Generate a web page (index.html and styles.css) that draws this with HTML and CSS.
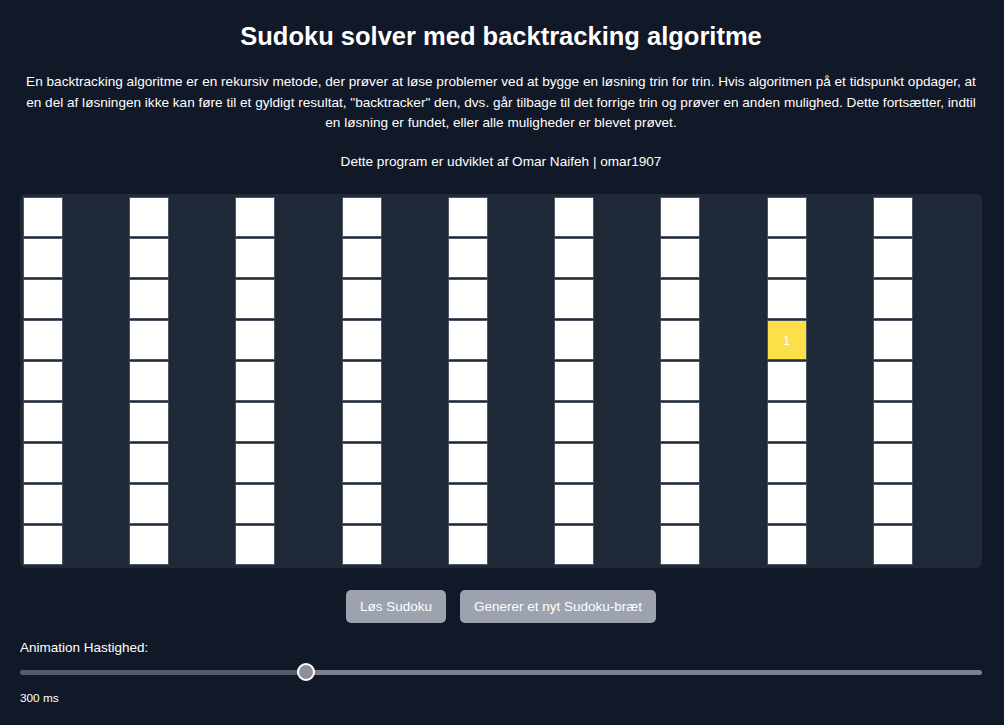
FILE: index.html
```html
<!DOCTYPE html>
<html lang="da">
<head>
<meta charset="utf-8">
<title>Sudoku solver</title>
<link rel="stylesheet" href="styles.css">
</head>
<body>
<main class="page">
  <h1 class="title">Sudoku solver med backtracking algoritme</h1>
  <p class="intro">En backtracking algoritme er en rekursiv metode, der prøver at løse problemer ved at bygge en løsning trin for trin. Hvis algoritmen på et tidspunkt opdager, at en del af løsningen ikke kan føre til et gyldigt resultat, "backtracker" den, dvs. går tilbage til det forrige trin og prøver en anden mulighed. Dette fortsætter, indtil en løsning er fundet, eller alle muligheder er blevet prøvet.</p>
  <p class="credit">Dette program er udviklet af Omar Naifeh | omar1907</p>

  <div class="board">
    <div class="cell"></div><div class="cell"></div><div class="cell"></div><div class="cell"></div><div class="cell"></div><div class="cell"></div><div class="cell"></div><div class="cell"></div><div class="cell"></div>
    <div class="cell"></div><div class="cell"></div><div class="cell"></div><div class="cell"></div><div class="cell"></div><div class="cell"></div><div class="cell"></div><div class="cell"></div><div class="cell"></div>
    <div class="cell"></div><div class="cell"></div><div class="cell"></div><div class="cell"></div><div class="cell"></div><div class="cell"></div><div class="cell"></div><div class="cell"></div><div class="cell"></div>
    <div class="cell"></div><div class="cell"></div><div class="cell"></div><div class="cell"></div><div class="cell"></div><div class="cell"></div><div class="cell"></div><div class="cell active">1</div><div class="cell"></div>
    <div class="cell"></div><div class="cell"></div><div class="cell"></div><div class="cell"></div><div class="cell"></div><div class="cell"></div><div class="cell"></div><div class="cell"></div><div class="cell"></div>
    <div class="cell"></div><div class="cell"></div><div class="cell"></div><div class="cell"></div><div class="cell"></div><div class="cell"></div><div class="cell"></div><div class="cell"></div><div class="cell"></div>
    <div class="cell"></div><div class="cell"></div><div class="cell"></div><div class="cell"></div><div class="cell"></div><div class="cell"></div><div class="cell"></div><div class="cell"></div><div class="cell"></div>
    <div class="cell"></div><div class="cell"></div><div class="cell"></div><div class="cell"></div><div class="cell"></div><div class="cell"></div><div class="cell"></div><div class="cell"></div><div class="cell"></div>
    <div class="cell"></div><div class="cell"></div><div class="cell"></div><div class="cell"></div><div class="cell"></div><div class="cell"></div><div class="cell"></div><div class="cell"></div><div class="cell"></div>
  </div>

  <div class="actions">
    <button class="btn">Løs Sudoku</button>
    <button class="btn">Generer et nyt Sudoku-bræt</button>
  </div>

  <label class="speed-label" for="speed">Animation Hastighed:</label>
  <input class="speed" id="speed" type="range" min="10" max="1000" value="300">
  <div class="speed-value">300 ms</div>
</main>
</body>
</html>
```

FILE: styles.css
```css
* { box-sizing: border-box; }

html, body {
  margin: 0;
  background: #111827;
}

body {
  font-family: "Liberation Sans", Arial, sans-serif;
  color: #ffffff;
}

.page {
  display: flex;
  flex-direction: column;
  padding: 22px 22px 0 20px;
}

.title {
  margin: 0;
  font-size: 25.5px;
  line-height: 28px;
  font-weight: bold;
  text-align: center;
}

.intro {
  margin: 22px 0 0;
  font-size: 13.6px;
  line-height: 20.5px;
  text-align: center;
}

.credit {
  margin: 18.5px 0 0;
  font-size: 13.6px;
  line-height: 20.5px;
  text-align: center;
}

.board {
  margin-top: 21.5px;
  background: #1f2937;
  border-radius: 6px;
  padding: 3px;
  display: grid;
  grid-template-columns: repeat(9, 1fr);
  grid-auto-rows: 40px;
  row-gap: 1px;
}

.cell {
  width: 40px;
  height: 40px;
  background: #ffffff;
  border: 1px solid #4b5563;
  display: flex;
  align-items: center;
  justify-content: center;
  font-size: 13px;
  color: #ffffff;
}

.cell.active {
  background: #fde047;
}

.actions {
  margin-top: 22px;
  display: flex;
  justify-content: center;
  gap: 14px;
}

.btn {
  height: 33px;
  padding: 0 14px;
  border: none;
  border-radius: 5px;
  background: #9ca3af;
  color: #ffffff;
  font-family: "Liberation Sans", Arial, sans-serif;
  font-size: 13.5px;
}

.speed-label {
  margin-top: 17px;
  font-size: 13.5px;
  line-height: 16px;
}

.speed {
  -webkit-appearance: none;
  appearance: none;
  margin: 7px 0 0;
  width: 100%;
  height: 18px;
  background: transparent;
}

.speed::-webkit-slider-runnable-track {
  height: 5px;
  border-radius: 3px;
  background: linear-gradient(to right, #565b68 0%, #565b68 29.3%, #7e818d 29.3%, #7e818d 100%);
}

.speed::-webkit-slider-thumb {
  -webkit-appearance: none;
  appearance: none;
  width: 18px;
  height: 18px;
  margin-top: -6.5px;
  border-radius: 50%;
  background: #8e8f9b;
  border: 2px solid #ffffff;
}

.speed-value {
  margin-top: 10px;
  font-size: 11.8px;
  line-height: 14px;
}
```
